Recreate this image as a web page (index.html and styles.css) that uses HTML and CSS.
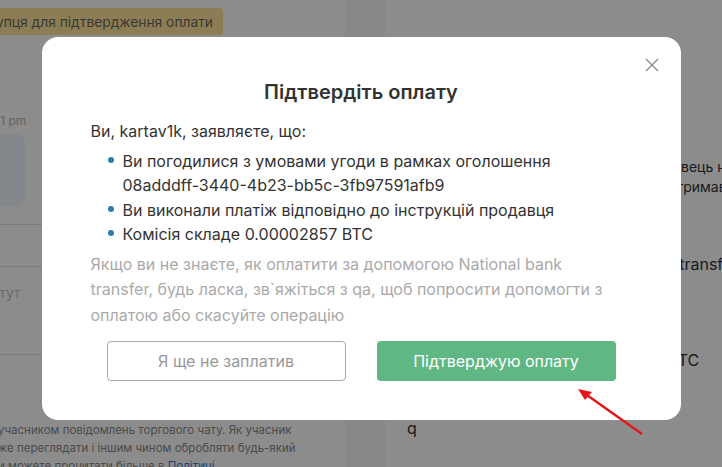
FILE: index.html
```html
<!DOCTYPE html>
<html lang="uk">
<head>
    <meta charset="UTF-8">
    <meta name="viewport" content="width=device-width, initial-scale=1.0">
    <title>Підтвердіть оплату</title>
    <link rel="stylesheet" href="styles.css">
</head>
<body>
    <div class="page">
        <section class="chat">
            <div class="status-banner">Очікування покупця для підтвердження оплати</div>
            <div class="msg-time">12:41 pm</div>
            <div class="msg-bubble"></div>
            <div class="chat-line"></div>
            <div class="chat-input">Введіть повідомлення тут</div>
            <div class="chat-notice">
                <div>учасником повідомлень торгового чату. Як учасник</div>
                <div>же переглядати і іншим чином обробляти будь-який</div>
                <div>и можете прочитати більше в <a href="#">Політиці</a></div>
            </div>
        </section>
        <aside class="details">
            <div class="details-note">
                <div>Продавець не підтвердив,</div>
                <div>вже отримав кошти</div>
            </div>
            <div class="details-row">
                <span>Метод оплати</span>
                <span>National bank transfer</span>
            </div>
            <div class="details-row sum">
                <span>Сума</span>
                <span>0.00002857 BTC</span>
            </div>
            <div class="details-user">q</div>
        </aside>
    </div>

    <div class="overlay">
        <div class="modal">
            <button class="modal-close" aria-label="Закрити">
                <svg width="14" height="14" viewBox="0 0 14 14"><path d="M1 1 L13 13 M13 1 L1 13" stroke="#8a8a8a" stroke-width="1.4" fill="none"/></svg>
            </button>
            <h2 class="modal-title">Підтвердіть оплату</h2>
            <p class="modal-lead">Ви, kartav1k, заявляєте, що:</p>
            <ul class="modal-list">
                <li>Ви погодилися з умовами угоди в рамках оголошення 08adddff-3440-4b23-bb5c-3fb97591afb9</li>
                <li>Ви виконали платіж відповідно до інструкцій продавця</li>
                <li>Комісія складе 0.00002857 BTC</li>
            </ul>
            <p class="modal-hint">Якщо ви не знаєте, як оплатити за допомогою National bank transfer, будь ласка, зв`яжіться з qa, щоб попросити допомогти з оплатою або скасуйте операцію</p>
            <div class="modal-actions">
                <button class="btn btn-outline">Я ще не заплатив</button>
                <button class="btn btn-green">Підтверджую оплату</button>
            </div>
        </div>
        <svg class="pointer-arrow" width="80" height="60" viewBox="0 0 80 60">
            <path d="M72 54 L14 13" stroke="#e3161b" stroke-width="2.5" fill="none"/>
            <path d="M8 9 L22 12 L15 20 Z" fill="#e3161b"/>
        </svg>
    </div>
</body>
</html>
```

FILE: styles.css
```css
body {
    margin: 0;
    font-family: Inter, "Noto Sans", sans-serif;
    background-color: #f7f7f7;
    overflow: hidden;
}

.page {
    display: grid;
    grid-template-columns: 345px 1fr;
    gap: 40px;
    height: 467px;
}

/* chat column */
.chat {
    background-color: #fff;
    padding-top: 8px;
    overflow: hidden;
}

.status-banner {
    width: 223px;
    height: 27px;
    box-sizing: border-box;
    display: flex;
    align-items: center;
    justify-content: flex-end;
    padding-right: 10px;
    background-color: #ffe49a;
    border-radius: 0 4px 4px 0;
    color: #6b6a64;
    font-size: 13.8px;
    white-space: nowrap;
    overflow: hidden;
}

.msg-time {
    margin-top: 78px;
    margin-left: -23px;
    font-size: 12px;
    color: #b4b4b4;
}

.msg-bubble {
    width: 25px;
    height: 72px;
    margin-top: 6px;
    background-color: #eef5fb;
    border-radius: 0 8px 8px 0;
}

.chat-line {
    margin-top: 18px;
    height: 41px;
    border-top: 1px solid #e0e0e0;
    border-bottom: 1px solid #e0e0e0;
}

.chat-input {
    height: 88px;
    margin-left: -157px;
    padding-top: 17px;
    box-sizing: border-box;
    border-bottom: 1px solid #e0e0e0;
    font-size: 14px;
    color: #c4c4c4;
    white-space: nowrap;
}

.chat-notice {
    margin-top: 66px;
    margin-left: -2px;
    font-size: 11.5px;
    line-height: 18px;
    color: #8a8a8a;
    white-space: nowrap;
}

.chat-notice a {
    color: #3a7bd5;
}

/* details card */
.details {
    background-color: #fff;
    padding-left: 22px;
    padding-top: 157px;
    color: #333;
    white-space: nowrap;
    overflow: hidden;
}

.details-note {
    padding-left: 230px;
    font-size: 14px;
    line-height: 20px;
}

.details-row {
    display: grid;
    grid-template-columns: 164px 1fr;
    font-size: 16px;
    line-height: 24px;
    margin-top: 55px;
}

.details-row.sum {
    margin-top: 72px;
}

.details-user {
    margin-top: 44px;
    font-size: 16px;
    line-height: 24px;
}

/* modal */
.overlay {
    position: fixed;
    top: 0;
    left: 0;
    right: 0;
    bottom: 0;
    display: flex;
    justify-content: center;
    align-items: flex-start;
    padding-top: 37px;
    background-color: rgba(0, 0, 0, 0.45);
}

.modal {
    position: relative;
    width: 639px;
    box-sizing: border-box;
    padding: 41px 60px 39px 49px;
    background-color: #fff;
    border-radius: 16px;
    color: #333;
}

.modal-close {
    position: absolute;
    top: 21px;
    right: 22px;
    padding: 0;
    border: none;
    background: none;
    cursor: pointer;
    line-height: 0;
}

.modal-title {
    margin: 0 -11px 0 0;
    text-align: center;
    font-size: 20px;
    line-height: 28px;
    font-weight: 600;
    color: #333;
}

.modal-lead {
    margin: 13px 0 0;
    font-size: 16px;
    line-height: 24px;
}

.modal-list {
    list-style: none;
    margin: 6px 0 0;
    padding-left: 32px;
    font-size: 16px;
    line-height: 24.4px;
}

.modal-list li {
    position: relative;
}

.modal-list li::before {
    content: "";
    position: absolute;
    left: -15px;
    top: 8px;
    width: 6px;
    height: 6px;
    border-radius: 50%;
    background-color: #2b7ea8;
}

.modal-hint {
    margin: 5px 0 0;
    font-size: 16px;
    line-height: 25.5px;
    color: #aaa;
}

.modal-actions {
    display: flex;
    justify-content: center;
    gap: 31px;
    margin: 13px -11px 0 0;
}

.btn {
    width: 239px;
    height: 40px;
    border-radius: 4px;
    font-family: inherit;
    font-size: 16px;
    cursor: pointer;
}

.btn-outline {
    background-color: #fff;
    border: 1px solid #aaa;
    color: #999;
}

.btn-green {
    background-color: #5fb784;
    border: none;
    color: #fff;
}

.pointer-arrow {
    position: absolute;
    left: 570px;
    top: 380px;
}
```
